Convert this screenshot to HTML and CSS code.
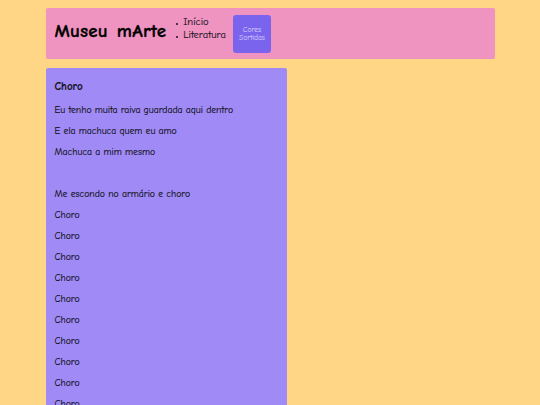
FILE: index.html
```html
<!DOCTYPE html>
<html lang="pt">
<head>
<meta charset="utf-8">
<title>Museu mArte</title>
<link rel="stylesheet" href="styles.css">
</head>
<body>
<div class="page">
  <header class="topbar">
    <h1 class="brand">Museu mArte</h1>
    <ul class="nav">
      <li>Início</li>
      <li>Literatura</li>
    </ul>
    <button class="colors-btn">Cores Sortidas</button>
  </header>
  <main class="content">
    <article class="poem">
      <h2 class="poem-title">Choro</h2>
      <p>Eu tenho muita raiva guardada aqui dentro</p>
      <p>E ela machuca quem eu amo</p>
      <p>Machuca a mim mesmo</p>
      <p>&nbsp;</p>
      <p>Me escondo no armário e choro</p>
      <p>Choro</p>
      <p>Choro</p>
      <p>Choro</p>
      <p>Choro</p>
      <p>Choro</p>
      <p>Choro</p>
      <p>Choro</p>
      <p>Choro</p>
      <p>Choro</p>
      <p>Choro</p>
      <p>Choro</p>
    </article>
  </main>
</div>
</body>
</html>
```

FILE: styles.css
```css
html, body {
  margin: 0;
  padding: 0;
  background: #ffd685;
}
body {
  font-family: "Comic Sans MS", "Comic Neue", "Open Sans", sans-serif;
  color: #111018;
}
.page {
  width: 449px;
  margin: 0 auto;
  padding-top: 8px;
}
.topbar {
  display: flex;
  align-items: flex-start;
  background: #ef93c0;
  border-radius: 2px;
  height: 51px;
  padding: 7px 10px 0 9px;
  box-sizing: border-box;
}
.brand {
  margin: 5px 0 0;
  font-size: 19px;
  line-height: 23px;
  font-weight: bold;
  letter-spacing: 0.2px;
  word-spacing: 2px;
  -webkit-text-stroke: 0.3px #000;
  color: #000;
}
.nav {
  margin: 1px 0 0 10px;
  padding: 0;
  list-style: none;
  font-size: 10.5px;
  line-height: 13px;
  -webkit-text-stroke: 0.1px #111018;
}
.nav li {
  display: flex;
  align-items: center;
}
.nav li::before {
  content: "";
  width: 2px;
  height: 2px;
  border-radius: 50%;
  background: #15131f;
  margin-right: 5px;
  margin-top: 2px;
}
.colors-btn {
  margin-left: 7px;
  width: 38px;
  height: 38px;
  border: none;
  border-radius: 3px;
  background: #7a64ee;
  color: #ddd6ff;
  font-family: inherit;
  font-size: 7.5px;
  line-height: 8.5px;
  padding: 0 3px;
}
.content {
  margin-top: 9px;
}
.poem {
  width: 241px;
  background: #a08bf6;
  border-radius: 2px;
  padding: 8px 9px;
  box-sizing: border-box;
  font-size: 9.7px;
  -webkit-text-stroke: 0.15px #111018;
}
.poem-title {
  font-size: 11px;
  margin: 4px 0 10px;
}
.poem p {
  margin: 0 0 8px;
  line-height: 13px;
}
```
